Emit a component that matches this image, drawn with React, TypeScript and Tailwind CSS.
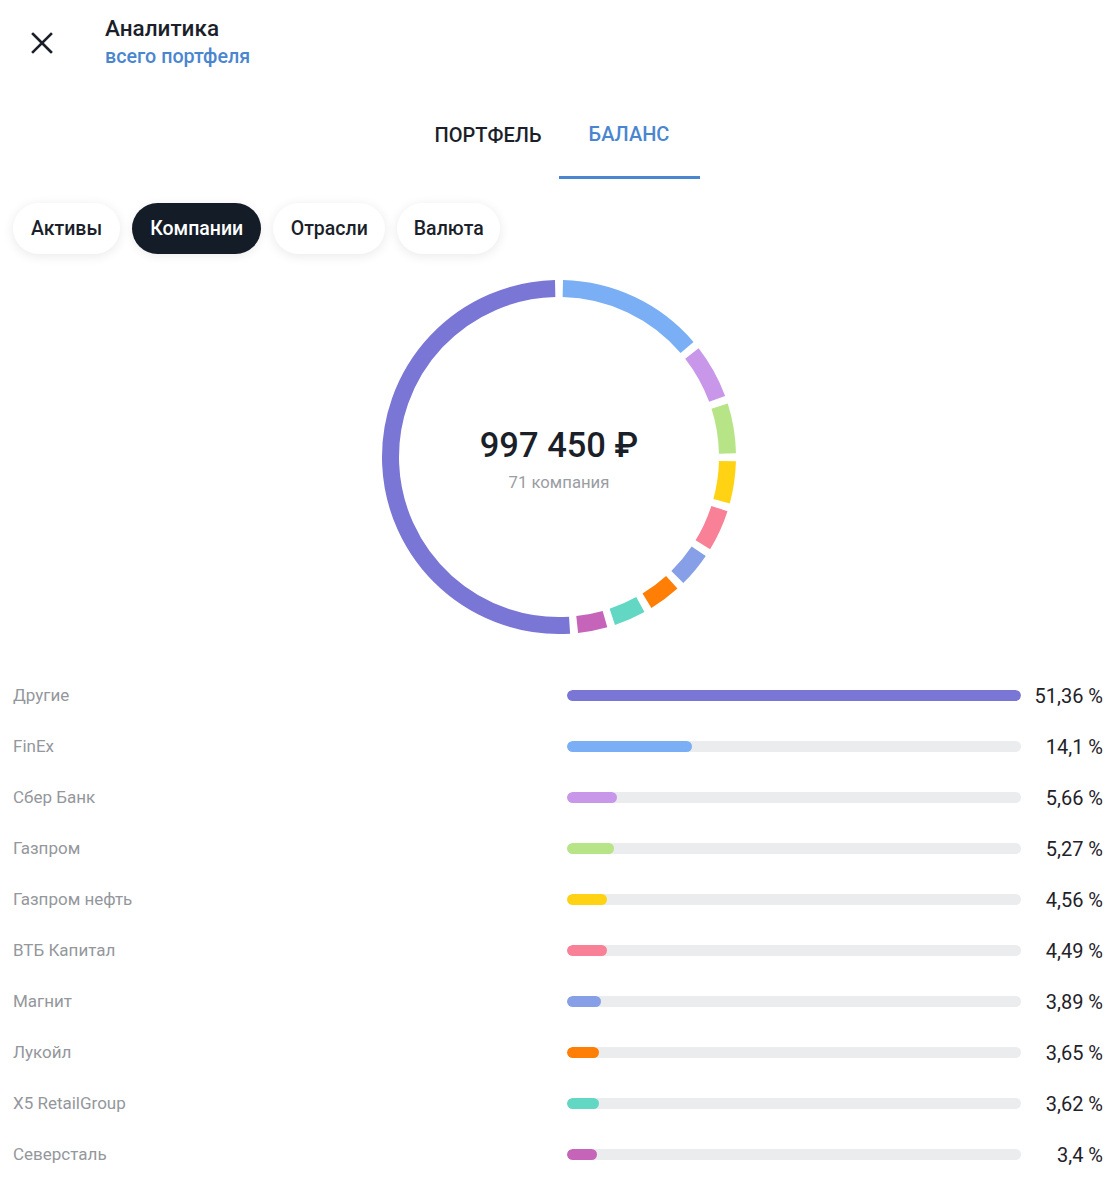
import React from 'react';

interface Item {
  name: string;
  value: number;
  color: string;
}

const items: Item[] = [
  { name: 'Другие', value: 51.36, color: '#7a76d6' },
  { name: 'FinEx', value: 14.1, color: '#7aaff5' },
  { name: 'Сбер Банк', value: 5.66, color: '#c997ea' },
  { name: 'Газпром', value: 5.27, color: '#b6e486' },
  { name: 'Газпром нефть', value: 4.56, color: '#ffd313' },
  { name: 'ВТБ Капитал', value: 4.49, color: '#f98197' },
  { name: 'Магнит', value: 3.89, color: '#869fe6' },
  { name: 'Лукойл', value: 3.65, color: '#ff7e05' },
  { name: 'X5 RetailGroup', value: 3.62, color: '#62d8c4' },
  { name: 'Северсталь', value: 3.4, color: '#c564b8' },
];

const fmt = (v: number) => String(v).replace('.', ',') + ' %';

function polar(cx: number, cy: number, r: number, deg: number) {
  const a = ((deg - 90) * Math.PI) / 180;
  return [cx + r * Math.cos(a), cy + r * Math.sin(a)];
}

function arcPath(cx: number, cy: number, r: number, from: number, to: number) {
  const [x1, y1] = polar(cx, cy, r, from);
  const [x2, y2] = polar(cx, cy, r, to);
  const large = to - from > 180 ? 1 : 0;
  return `M ${x1} ${y1} A ${r} ${r} 0 ${large} 1 ${x2} ${y2}`;
}

function Donut() {
  const size = 360;
  const c = size / 2;
  const r = 168.5;
  const gap = 2.6;
  // clockwise from the top: all companies first, "Другие" closes the circle
  const order = [...items.slice(1), items[0]];
  let angle = 0;
  const segs = order.map((it) => {
    const sweep = (it.value / 100) * 360;
    const from = angle + gap / 2;
    const to = angle + sweep - gap / 2;
    angle += sweep;
    return { ...it, d: arcPath(c, c, r, from, to) };
  });

  return (
    <div className="relative w-[360px] h-[360px]">
      <svg width={size} height={size} viewBox={`0 0 ${size} ${size}`}>
        {segs.map((s) => (
          <path key={s.name} d={s.d} fill="none" stroke={s.color} strokeWidth={17} />
        ))}
      </svg>
      <div className="absolute inset-0 flex flex-col items-center justify-center pt-[6px]">
        <div className="text-[34.5px] font-medium text-[#1b1f2a] leading-none">997 450 ₽</div>
        <div className="mt-[13px] text-[16.7px] text-[#9a9da3] leading-none">71 компания</div>
      </div>
    </div>
  );
}

const pillBase = 'h-[51px] rounded-full flex items-center text-[19.5px] font-medium';

export default function App() {
  const max = Math.max(...items.map((i) => i.value));
  const pills = [
    { label: 'Активы', cls: 'px-[18px] bg-white text-[#1b1f2a] shadow-[0_2px_12px_rgba(0,0,0,0.09)]' },
    { label: 'Компании', cls: 'px-[18px] bg-[#141c28] text-white shadow-[0_2px_10px_rgba(0,0,0,0.08)]' },
    { label: 'Отрасли', cls: 'px-[17.5px] bg-white text-[#1b1f2a] shadow-[0_2px_12px_rgba(0,0,0,0.09)]' },
    { label: 'Валюта', cls: 'px-[16.5px] bg-white text-[#1b1f2a] shadow-[0_2px_12px_rgba(0,0,0,0.09)]' },
  ];

  return (
    <div className="w-[1117px] h-[1200px] bg-white overflow-hidden font-['Roboto','Liberation_Sans',sans-serif]">
      {/* header */}
      <div className="flex items-start pt-[15px]">
        <div className="w-[105px] flex justify-center pr-[22px] pt-[17px]">
          <svg width="22" height="22" viewBox="0 0 22 22">
            <path d="M2 2 L20 20 M20 2 L2 20" stroke="#1b1f2a" strokeWidth="2.6" strokeLinecap="square" />
          </svg>
        </div>
        <div className="flex flex-col">
          <div className="text-[22.5px] font-medium text-[#1b1f2a] leading-[26px]">Аналитика</div>
          <div className="text-[19.7px] font-medium text-[#4a86d0] leading-[26px] mt-[3px]">всего портфеля</div>
        </div>
      </div>

      {/* tabs */}
      <div className="flex justify-center mt-[33px]">
        <div className="w-[141px] h-[76px] flex items-center justify-center pb-[12px] text-[20px] font-medium text-[#1b1f2a]">
          ПОРТФЕЛЬ
        </div>
        <div className="w-[141px] h-[76px] flex items-center justify-center pb-[12px] text-[20px] font-medium text-[#4a86d0] border-b-[3px] border-[#4a86d0]">
          БАЛАНС
        </div>
      </div>

      {/* filter pills */}
      <div className="flex gap-[12px] pl-[13px] mt-[24px]">
        {pills.map((p) => (
          <div key={p.label} className={`${pillBase} ${p.cls}`}>
            {p.label}
          </div>
        ))}
      </div>

      {/* chart */}
      <div className="flex justify-center mt-[23px] pl-[1px]">
        <Donut />
      </div>

      {/* list */}
      <div className="mt-[33px] flex flex-col">
        {items.map((it) => (
          <div key={it.name} className="flex items-center h-[51px] pl-[13px] pr-[14px]">
            <div className="flex-1 text-[17px] text-[#94979c]">{it.name}</div>
            <div className="w-[454px] h-[11px] rounded-full bg-[#ebecee] overflow-hidden">
              <div
                className="h-full rounded-full"
                style={{ width: `${(it.value / max) * 100}%`, backgroundColor: it.color }}
              />
            </div>
            <div className="w-[82px] text-right text-[20px] text-[#1f2229]">{fmt(it.value)}</div>
          </div>
        ))}
      </div>
    </div>
  );
}
